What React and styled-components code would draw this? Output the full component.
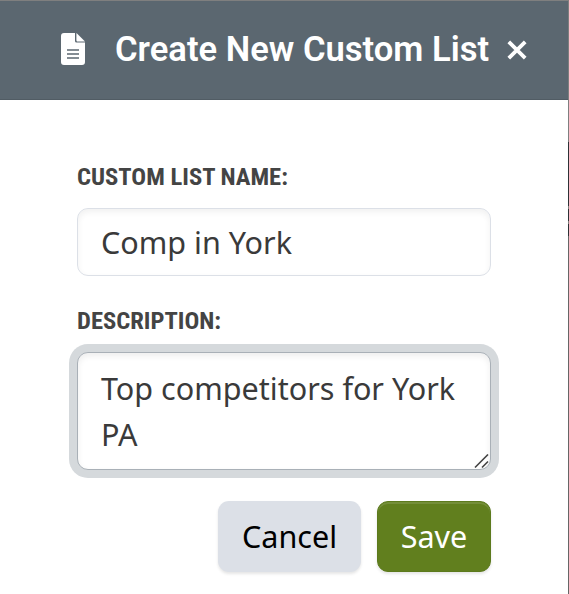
import React from 'react'
import styled, { createGlobalStyle } from 'styled-components'

const GlobalStyle = createGlobalStyle`
    * {
        box-sizing: border-box;
    }
    body {
        margin: 0;
        background: #fff;
        font-family: "Noto Sans", sans-serif;
    }
`

const Page = styled.div`
    width: 569px;
    height: 594px;
    display: flex;
    overflow: hidden;
    background: #fff;
`

const Modal = styled.div`
    width: 568px;
    height: 594px;
`

// sliver of the page behind the modal
const Edge = styled.div`
    width: 1px;
    height: 594px;
    background: linear-gradient(
        #7f7f7f 142px,
        #2d3236 142px 206px,
        #827f7c 206px 209px,
        #2d3236 209px 221px,
        #827f7c 221px 224px,
        #2d3236 224px 236px,
        #666 236px
    );
`

const Header = styled.header`
    height: 100px;
    padding: 0 41px 2px 61px;
    display: flex;
    align-items: center;
    background: #5b6770;
    border-top: 1px solid #7f7f7f;
    border-bottom: 1px solid #515c64;
    color: #fff;
`

const Title = styled.h1`
    margin: 0 0 0 30px;
    flex: 1;
    font-family: Roboto, sans-serif;
    font-size: 34.6px;
    font-weight: 600;
    line-height: 44px;
    white-space: nowrap;
`

const CloseButton = styled.button`
    padding: 0;
    border: 0;
    background: none;
    display: flex;
    margin-top: 2px;
`

const Form = styled.form`
    padding: 61px 77px 0;
`

const Label = styled.label`
    display: block;
    height: 30px;
    margin-bottom: 17px;
    font-family: "Roboto Condensed", Roboto, sans-serif;
    font-stretch: 75%;
    font-size: 24.6px;
    font-weight: 700;
    line-height: 31px;
    color: #444;
    white-space: nowrap;
    text-transform: uppercase;
`

const Input = styled.input`
    display: block;
    width: 414px;
    height: 68px;
    margin-bottom: 29px;
    padding: 0 23px;
    border: 1px solid #dce0e7;
    border-radius: 11px;
    outline: none;
    background: #fff;
    box-shadow: inset 0 3px 6px rgba(0, 0, 0, .06);
    font: 400 30.55px/46px "Noto Sans", sans-serif;
    color: #3a3a3a;
`

const TextAreaWrapper = styled.div`
    position: relative;
    height: 118px;
    margin-bottom: 31px;
`

const TextArea = styled.textarea`
    display: block;
    width: 414px;
    height: 118px;
    padding: 12px 23px;
    border: 1px solid #a9b0b7;
    border-radius: 11px;
    outline: none;
    resize: none;
    overflow: hidden;
    background: #fff;
    box-shadow: inset 0 3px 6px rgba(0, 0, 0, .07), 0 0 0 8px #d5d9dc;
    font: 400 30.55px/46px "Noto Sans", sans-serif;
    color: #3a3a3a;
`

const ResizeHandle = styled.svg`
    position: absolute;
    right: 2px;
    bottom: 1px;
`

const Actions = styled.div`
    display: flex;
    justify-content: flex-end;
    gap: 16px;
`

const Button = styled.button`
    width: ${({ $primary }) => ($primary ? 114 : 143)}px;
    height: 71px;
    padding: 0 0 1px;
    border: ${({ $primary }) => ($primary ? '1px solid #5c7a1d' : 0)};
    border-radius: 11px;
    background: ${({ $primary }) => ($primary ? '#617f1e' : '#dce0e7')};
    box-shadow: ${({ $primary }) => ($primary ? 'inset 0 2px 0 rgba(255, 255, 255, .12), ' : '')}0 2px 3px rgba(0, 0, 0, .1);
    font: 400 30.55px/46px "Noto Sans", sans-serif;
    color: ${({ $primary }) => ($primary ? '#fff' : '#000')};
`

const FileIcon = () => (
    <svg width="24" height="32" viewBox="0 0 24 32">
        <path
            fill="#fff"
            d="M3 0H14V8Q14 9.600 15.600 9.600H24V29Q24 32 21 32H3Q0 32 0 29V3Q0 0 3 0ZM15.400 0L24 8.500H16.600Q15.400 8.500 15.400 7.300Z"
        />
        <path stroke="#5b6770" strokeWidth="1.300" d="M6 17H18M6 21H18M6 25H18"/>
    </svg>
)

const CloseIcon = () => (
    <svg width="20" height="20" viewBox="0 0 20 20">
        <path stroke="#fff" strokeWidth="3.800" d="M1.800 1.800L18.200 18.200M18.200 1.800L1.800 18.200"/>
    </svg>
)

export default () => (
    <Page>
        <GlobalStyle/>
        <Modal>
            <Header>
                <FileIcon/>
                <Title>Create New Custom List</Title>
                <CloseButton aria-label="Close">
                    <CloseIcon/>
                </CloseButton>
            </Header>
            <Form>
                <Label htmlFor="name">Custom List Name:</Label>
                <Input id="name" defaultValue="Comp in York"/>
                <Label htmlFor="description">Description:</Label>
                <TextAreaWrapper>
                    <TextArea id="description" spellCheck={false} defaultValue="Top competitors for York PA"/>
                    <ResizeHandle width="15" height="15" viewBox="0 0 15 15">
                        <path stroke="#444" strokeWidth="1.600" d="M1 13.500L14 .5M8 13.500L14 7.500"/>
                    </ResizeHandle>
                </TextAreaWrapper>
                <Actions>
                    <Button type="button">Cancel</Button>
                    <Button type="button" $primary>Save</Button>
                </Actions>
            </Form>
        </Modal>
        <Edge/>
    </Page>
)
